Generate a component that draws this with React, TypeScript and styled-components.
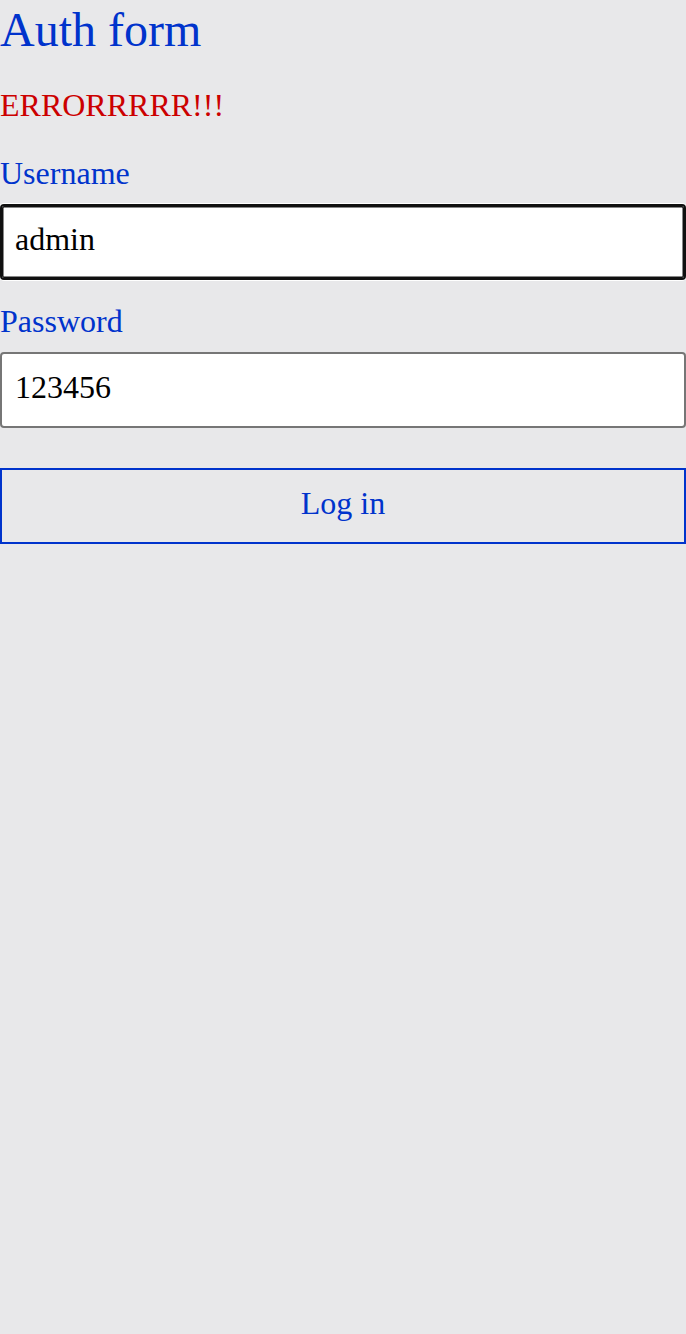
import React from "react";
import styled, { createGlobalStyle } from "styled-components";

const Global = createGlobalStyle`
  html, body { margin: 0; padding: 0; background: #e8e8ea; }
  body { font-family: "Liberation Serif", "Times New Roman", serif; min-height: 1334px; }
  * { box-sizing: border-box; }
`;

const Form = styled.form`
  display: flex;
  flex-direction: column;
  width: 686px;
`;

const Title = styled.h1`
  margin: 2px 0 0;
  font-size: 48px;
  font-weight: 400;
  line-height: 55px;
  color: #0033cc;
`;

const ErrorText = styled.p`
  margin: 30px 0 0;
  font-size: 32px;
  line-height: 37px;
  color: #cc0000;
`;

const Label = styled.label<{ $top: number }>`
  display: block;
  margin: ${(p) => p.$top}px 0 12px;
  font-size: 32px;
  line-height: 37px;
  color: #0033cc;
`;

const Input = styled.input<{ $focused?: boolean }>`
  display: block;
  width: 686px;
  height: 76px;
  margin: 0;
  padding: 0 13px 6px;
  font-family: "Liberation Serif", "Times New Roman", serif;
  font-size: 32px;
  color: #000;
  background: #fff;
  border: 2px solid ${(p) => (p.$focused ? "#101010" : "#767676")};
  border-radius: 4px;
  box-shadow: ${(p) =>
    p.$focused ? "inset 0 0 0 1.5px #101010, 0 0 0 1px #ffffff" : "none"};
  outline: none;
`;

const Button = styled.button`
  display: block;
  width: 686px;
  height: 76px;
  margin: 40px 0 0;
  padding: 0 0 6px;
  font-family: "Liberation Serif", "Times New Roman", serif;
  font-size: 32px;
  color: #0033cc;
  background: transparent;
  border: 2px solid #0033cc;
  border-radius: 0;
`;

export default function App() {
  return (
    <>
      <Global />
      <Form onSubmit={(e) => e.preventDefault()}>
        <Title>Auth form</Title>
        <ErrorText>ERRORRRRR!!!</ErrorText>
        <Label $top={31} htmlFor="u">Username</Label>
        <Input id="u" $focused defaultValue="admin" />
        <Label $top={23} htmlFor="p">Password</Label>
        <Input id="p" defaultValue="123456" />
        <Button type="submit">Log in</Button>
      </Form>
    </>
  );
}
